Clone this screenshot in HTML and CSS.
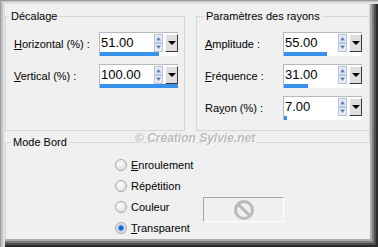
FILE: index.html
```html
<!DOCTYPE html>
<html>
  <head>
    <meta charset="utf-8" />
    <link rel="stylesheet" href="styles.css">
  </head>
  <body>
    <div class="frame">
      <div class="top">
        <fieldset class="group group-offset">
          <legend>Décalage</legend>
          <div class="row">
            <label class="label"><u>H</u>orizontal (%) :</label>
            <div class="spinner">
              <div class="spin-main">
                <span class="value">51.00</span>
                <svg class="arrows" width="9" height="18" viewBox="0 0 9 18">
                  <rect x="0.5" y="0.5" width="8" height="8" fill="#e4ebf5" stroke="#b9c6d8" />
                  <rect x="0.5" y="9.5" width="8" height="8" fill="#e4ebf5" stroke="#b9c6d8" />
                  <path d="M2 6.5 L4.5 3 L7 6.5 Z" fill="#5f83bd" />
                  <path d="M2 11.5 L4.5 15 L7 11.5 Z" fill="#5f83bd" />
                </svg>
                <span class="drop"></span>
              </div>
              <div class="track"><div class="fill" style="width: 75.5%"></div></div>
            </div>
          </div>
          <div class="row">
            <label class="label"><u>V</u>ertical (%) :</label>
            <div class="spinner">
              <div class="spin-main">
                <span class="value">100.00</span>
                <svg class="arrows" width="9" height="18" viewBox="0 0 9 18">
                  <rect x="0.5" y="0.5" width="8" height="8" fill="#e4ebf5" stroke="#b9c6d8" />
                  <rect x="0.5" y="9.5" width="8" height="8" fill="#e4ebf5" stroke="#b9c6d8" />
                  <path d="M2 6.5 L4.5 3 L7 6.5 Z" fill="#5f83bd" />
                  <path d="M2 11.5 L4.5 15 L7 11.5 Z" fill="#5f83bd" />
                </svg>
                <span class="drop"></span>
              </div>
              <div class="track"><div class="fill" style="width: 100%"></div></div>
            </div>
          </div>
        </fieldset>

        <fieldset class="group group-rays">
          <legend>Paramètres des rayons</legend>
          <div class="row">
            <label class="label"><u>A</u>mplitude :</label>
            <div class="spinner">
              <div class="spin-main">
                <span class="value">55.00</span>
                <svg class="arrows" width="9" height="18" viewBox="0 0 9 18">
                  <rect x="0.5" y="0.5" width="8" height="8" fill="#e4ebf5" stroke="#b9c6d8" />
                  <rect x="0.5" y="9.5" width="8" height="8" fill="#e4ebf5" stroke="#b9c6d8" />
                  <path d="M2 6.5 L4.5 3 L7 6.5 Z" fill="#5f83bd" />
                  <path d="M2 11.5 L4.5 15 L7 11.5 Z" fill="#5f83bd" />
                </svg>
                <span class="drop"></span>
              </div>
              <div class="track"><div class="fill" style="width: 55%"></div></div>
            </div>
          </div>
          <div class="row">
            <label class="label"><u>F</u>réquence :</label>
            <div class="spinner">
              <div class="spin-main">
                <span class="value">31.00</span>
                <svg class="arrows" width="9" height="18" viewBox="0 0 9 18">
                  <rect x="0.5" y="0.5" width="8" height="8" fill="#e4ebf5" stroke="#b9c6d8" />
                  <rect x="0.5" y="9.5" width="8" height="8" fill="#e4ebf5" stroke="#b9c6d8" />
                  <path d="M2 6.5 L4.5 3 L7 6.5 Z" fill="#5f83bd" />
                  <path d="M2 11.5 L4.5 15 L7 11.5 Z" fill="#5f83bd" />
                </svg>
                <span class="drop"></span>
              </div>
              <div class="track"><div class="fill" style="width: 31%"></div></div>
            </div>
          </div>
          <div class="row">
            <label class="label">Ra<u>y</u>on (%) :</label>
            <div class="spinner">
              <div class="spin-main">
                <span class="value">7.00</span>
                <svg class="arrows" width="9" height="18" viewBox="0 0 9 18">
                  <rect x="0.5" y="0.5" width="8" height="8" fill="#e4ebf5" stroke="#b9c6d8" />
                  <rect x="0.5" y="9.5" width="8" height="8" fill="#e4ebf5" stroke="#b9c6d8" />
                  <path d="M2 6.5 L4.5 3 L7 6.5 Z" fill="#5f83bd" />
                  <path d="M2 11.5 L4.5 15 L7 11.5 Z" fill="#5f83bd" />
                </svg>
                <span class="drop"></span>
              </div>
              <div class="track"><div class="fill" style="width: 3.5%"></div></div>
            </div>
          </div>
        </fieldset>
      </div>

      <fieldset class="group group-mode">
        <legend>Mode Bord</legend>
        <div class="mode-body">
          <div class="radios">
            <div class="radio-row"><span class="radio"></span><span><u>E</u>nroulement</span></div>
            <div class="radio-row"><span class="radio"></span><span>Répétition</span></div>
            <div class="radio-row"><span class="radio"></span><span>Couleur</span></div>
            <div class="radio-row"><span class="radio checked"></span><span><u>T</u>ransparent</span></div>
          </div>
          <div class="swatch">
            <svg width="22" height="22" viewBox="0 0 22 22">
              <circle cx="11" cy="11" r="8.5" fill="none" stroke="#b9b9b9" stroke-width="3" />
              <path d="M5 5 L17 17" stroke="#b9b9b9" stroke-width="3" />
            </svg>
          </div>
        </div>
      </fieldset>

      <div class="credit">© Création Sylvie.net</div>
    </div>
  </body>
</html>
```

FILE: styles.css
```css
* {
  box-sizing: border-box;
}
body {
  margin: 0;
  font-family: "Liberation Sans", Arial, sans-serif;
  font-size: 11px;
  color: #000;
}

/* Outer dialog frame with its bevel */
.frame {
  position: relative;
  width: 378px;
  height: 247px;
  padding: 9px 8px 8px 5px;
  display: flex;
  flex-direction: column;
  background: #f0f0f0;
  box-shadow:
    inset 1px 1px 0 #9c9c9c,
    inset 3px 2px 0 #c4c4c4,
    inset 5px 4px 0 #e0e0e0,
    inset -2px -2px 0 #2c2c2c,
    inset -4px -4px 0 #4e4e4e,
    inset -6px -6px 0 #7c7c7c,
    inset -8px -8px 0 #acacac,
    inset -9px -9px 0 #d6d6d6;
}

.top {
  display: flex;
  gap: 11px;
}

/* Group boxes */
.group {
  margin: 0;
  min-width: 0;
  border: 1px solid #d2d8dc;
  padding: 0 0 0 3px;
}
.group legend {
  padding: 0 2px;
  line-height: 14px;
}
.group-offset {
  width: 180px;
  height: 122px;
  padding-top: 9px;
}
.group-rays {
  width: 174px;
  height: 122px;
  padding-top: 9px;
  padding-left: 7px;
}
.group-mode {
  flex: 1;
  margin-top: 4px;
  padding-left: 5px;
  border-right-color: #f0f0f0;
  border-bottom-color: #f0f0f0;
}

/* Label + spinner rows */
.row {
  display: flex;
  align-items: center;
  height: 24px;
  margin-bottom: 8px;
}
.group-offset .row {
  padding-left: 5px;
}
.group-rays .row {
  padding-left: 1px;
}
.label {
  flex: none;
}
.group-offset .label {
  width: 85px;
}
.group-rays .label {
  width: 78px;
}

.spinner {
  width: 79px;
  height: 24px;
  display: flex;
  flex-direction: column;
  background: #fff;
  border-top: 1px solid #b4bac0;
  border-left: 1px solid #b4bac0;
}
.spin-main {
  flex: 1;
  display: flex;
  align-items: center;
}
.value {
  flex: 1;
  font-size: 13px;
  line-height: 18px;
  padding-left: 1px;
}
.arrows {
  flex: none;
  margin-right: 2px;
}
.drop {
  flex: none;
  width: 13px;
  height: 18px;
  display: flex;
  align-items: center;
  justify-content: center;
  background: #dedede;
  border: 1px solid;
  border-color: #fafafa #3a3a3a #3a3a3a #fafafa;
}
.drop::after {
  content: "";
  border-left: 4px solid transparent;
  border-right: 4px solid transparent;
  border-top: 4px solid #000;
}
.track {
  height: 4px;
  background: #fff;
}
.fill {
  height: 100%;
  background: #3790e9;
}

/* Mode Bord */
.mode-body {
  display: flex;
  padding: 9px 0 0 104px;
}
.radios {
  width: 88px;
  display: flex;
  flex-direction: column;
  gap: 7px;
}
.radio-row {
  display: flex;
  align-items: center;
  gap: 4px;
  height: 14px;
}
.radio {
  flex: none;
  width: 12px;
  height: 12px;
  border-radius: 50%;
  border: 1px solid #a8a8a8;
  background: radial-gradient(circle at 40% 35%, #ffffff, #d6d6d6);
}
.radio.checked {
  background: radial-gradient(circle, #0c4aa0 0, #2a7be0 2px, #8ab6ea 3px, #ececec 4px, #d0d0d0 6px);
}
.swatch {
  width: 81px;
  height: 25px;
  margin-top: 39px;
  display: flex;
  align-items: center;
  justify-content: center;
  border: 1px solid;
  border-color: #a4a4a4 #ffffff #ffffff #a4a4a4;
}

/* Watermark across the group lines */
.credit {
  position: absolute;
  left: 135px;
  top: 131px;
  font-size: 12px;
  line-height: 14px;
  font-weight: bold;
  font-style: italic;
  color: #bcbcbc;
  text-shadow: 1px 1px 0 #fff;
}
```
